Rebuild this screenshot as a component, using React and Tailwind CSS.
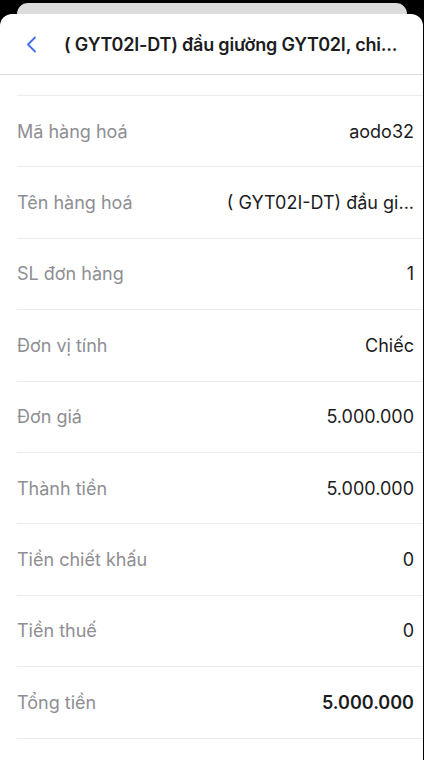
import React from "react";

const rows = [
  ["Mã hàng hoá", "aodo32"],
  ["Tên hàng hoá", "( GYT02I-DT) đầu gi..."],
  ["SL đơn hàng", "1"],
  ["Đơn vị tính", "Chiếc"],
  ["Đơn giá", "5.000.000"],
  ["Thành tiền", "5.000.000"],
  ["Tiền chiết khấu", "0"],
  ["Tiền thuế", "0"],
  ["Tổng tiền", "5.000.000", true],
];

export default function App() {
  return (
    <div
      className="h-[760px] w-[424px] overflow-hidden bg-black"
      style={{ fontFamily: "Inter, 'Noto Sans', sans-serif" }}
    >
      <div className="mx-[17px] mt-[3px] h-[20px] rounded-t-[11px] bg-[#dcdcdc]" />
      <div className="-mt-[9px] h-[760px] w-[423px] rounded-t-[12px] bg-white">
        <div className="flex h-[61px] items-center border-b border-[#d9d9d9]">
          <div className="flex w-[64px] items-center pl-[26px]">
            <svg width="11" height="17" viewBox="0 0 11 17" fill="none">
              <path
                d="M9 1.5L2 8.5L9 15.5"
                stroke="#3f6ef2"
                strokeWidth="1.8"
                strokeLinecap="round"
                strokeLinejoin="round"
              />
            </svg>
          </div>
          <div className="truncate text-[18px] font-semibold tracking-[-0.2px] text-[#1c1c1e]">
            ( GYT02I-DT) đầu giường GYT02I, chi...
          </div>
        </div>
        <div className="ml-[17px] h-[21px] border-b border-[#ebebeb]" />
        {rows.map(([label, value, bold]) => (
          <div
            key={label}
            className="ml-[17px] flex h-[71.4px] items-center justify-between border-b border-[#ebebeb] pr-[9px]"
          >
            <span className="text-[18px] text-[#8e8e93]">{label}</span>
            <span
              className={
                "max-w-[190px] truncate text-[18px] text-[#1c1c1e] " +
                (bold ? "font-semibold" : "font-normal")
              }
            >
              {value}
            </span>
          </div>
        ))}
      </div>
    </div>
  );
}
